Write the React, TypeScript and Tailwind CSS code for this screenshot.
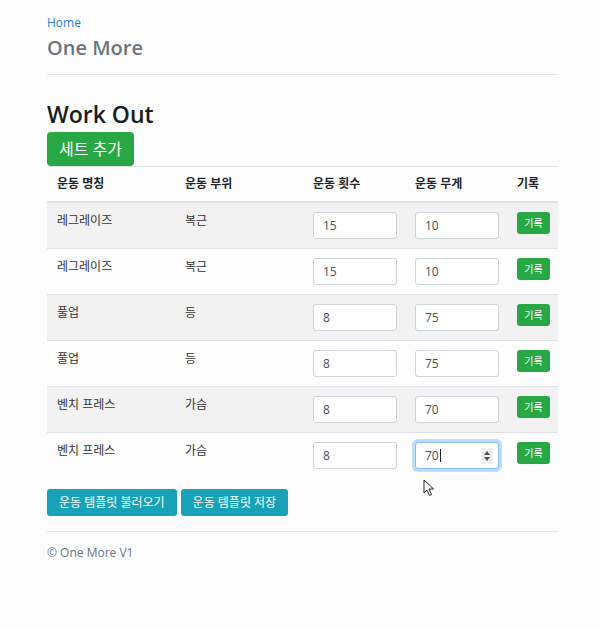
import React from "react";

type Row = { name: string; part: string; reps: string; weight: string };

const rows: Row[] = [
  { name: "레그레이즈", part: "복근", reps: "15", weight: "10" },
  { name: "레그레이즈", part: "복근", reps: "15", weight: "10" },
  { name: "풀업", part: "등", reps: "8", weight: "75" },
  { name: "풀업", part: "등", reps: "8", weight: "75" },
  { name: "벤치 프레스", part: "가슴", reps: "8", weight: "70" },
  { name: "벤치 프레스", part: "가슴", reps: "8", weight: "70" },
];

const font = {
  fontFamily: '"Open Sans", "Noto Sans CJK KR", sans-serif',
};

function NumberInput({ value, focused }: { value: string; focused?: boolean }) {
  if (focused) {
    return (
      <div className="flex h-[27px] w-[84px] items-center justify-between rounded-[3px] border border-[#80bdff] bg-white pl-[9px] pr-[5px] text-[12px] text-[#495057] shadow-[0_0_0_3px_rgba(0,123,255,0.25)]">
        <span className="flex items-center">
          70<span className="ml-[1px] inline-block h-[13px] w-px bg-[#222]" />
        </span>
        <span className="flex h-[16px] w-[12px] flex-col items-center justify-center gap-[2px] bg-[#eee]">
          <svg width="6" height="4" viewBox="0 0 6 4">
            <path d="M0 4 L3 0 L6 4 Z" fill="#555" />
          </svg>
          <svg width="6" height="4" viewBox="0 0 6 4">
            <path d="M0 0 L3 4 L6 0 Z" fill="#555" />
          </svg>
        </span>
      </div>
    );
  }
  return (
    <div className="flex h-[27px] w-[84px] items-center rounded-[3px] border border-[#ced4da] bg-white pl-[9px] text-[12px] text-[#495057]">
      {value}
    </div>
  );
}

export default function App() {
  return (
    <div className="relative min-h-[629px] bg-[#fdfdfe] text-[#212529]" style={font}>
      <div className="ml-[47px] w-[511px] pt-[14px]">
        {/* Header */}
        <div className="text-[12px] leading-[18px] text-[#2a7fc0]">Home</div>
        <div className="mt-[3px] text-[20px] font-semibold leading-[26px] text-[#6c757d]">One More</div>
        <hr className="mt-[13px] border-t border-[#e5e5e5]" />

        {/* Work out */}
        <h3 className="mt-[24px] text-[23px] font-semibold leading-[30px] text-[#1c1c1c]">Work Out</h3>
        <button className="mt-[3px] h-[34px] rounded-[4px] bg-[#28a745] px-[12px] text-[16px] text-white">
          세트 추가
        </button>

        <table className="w-full table-fixed border-collapse text-left text-[12px]">
          <thead>
            <tr className="border-t border-[#dee2e6] border-b-2">
              <th className="w-[128px] px-[10px] py-[8px] font-bold leading-[18px]">운동 명칭</th>
              <th className="w-[128px] px-[10px] py-[8px] font-bold leading-[18px]">운동 부위</th>
              <th className="w-[102px] px-[10px] py-[8px] font-bold leading-[18px]">운동 횟수</th>
              <th className="w-[102px] px-[10px] py-[8px] font-bold leading-[18px]">운동 무게</th>
              <th className="px-[10px] py-[8px] font-bold leading-[18px]">기록</th>
            </tr>
          </thead>
          <tbody>
            {rows.map((r, i) => (
              <tr key={i} className={`border-t border-[#dee2e6] ${i % 2 === 0 ? "bg-[#f2f2f3]" : ""}`}>
                <td className="px-[10px] pt-[9px] pb-[9px] align-top leading-[18px] text-[#333]">{r.name}</td>
                <td className="px-[10px] pt-[9px] pb-[9px] align-top leading-[18px] text-[#333]">{r.part}</td>
                <td className="px-[10px] py-[9px] align-top">
                  <NumberInput value={r.reps} />
                </td>
                <td className="px-[10px] py-[9px] align-top">
                  <NumberInput value={r.weight} focused={i === rows.length - 1} />
                </td>
                <td className="px-[10px] py-[9px] align-top">
                  <button className="h-[22px] w-[33px] rounded-[3px] bg-[#28a745] text-[10px] text-white">기록</button>
                </td>
              </tr>
            ))}
          </tbody>
        </table>

        <div className="mt-[11px] flex gap-[4px]">
          <button className="h-[27px] rounded-[3px] bg-[#17a2b8] px-[12px] text-[12px] text-white">
            운동 템플릿 불러오기
          </button>
          <button className="h-[27px] rounded-[3px] bg-[#17a2b8] px-[12px] text-[12px] text-white">
            운동 템플릿 저장
          </button>
        </div>

        <hr className="mt-[15px] border-t border-[#e5e5e5]" />
        <div className="mt-[12px] text-[12px] leading-[18px] text-[#6c757d]">© One More V1</div>
      </div>

      {/* mouse pointer */}
      <svg className="absolute left-[423px] top-[479px]" width="12" height="18" viewBox="0 0 12 18">
        <path d="M1 1 L1 14 L4 11 L6.5 16.5 L8.5 15.5 L6 10 L10.5 10 Z" fill="white" stroke="#222" strokeWidth="1" />
      </svg>
    </div>
  );
}
